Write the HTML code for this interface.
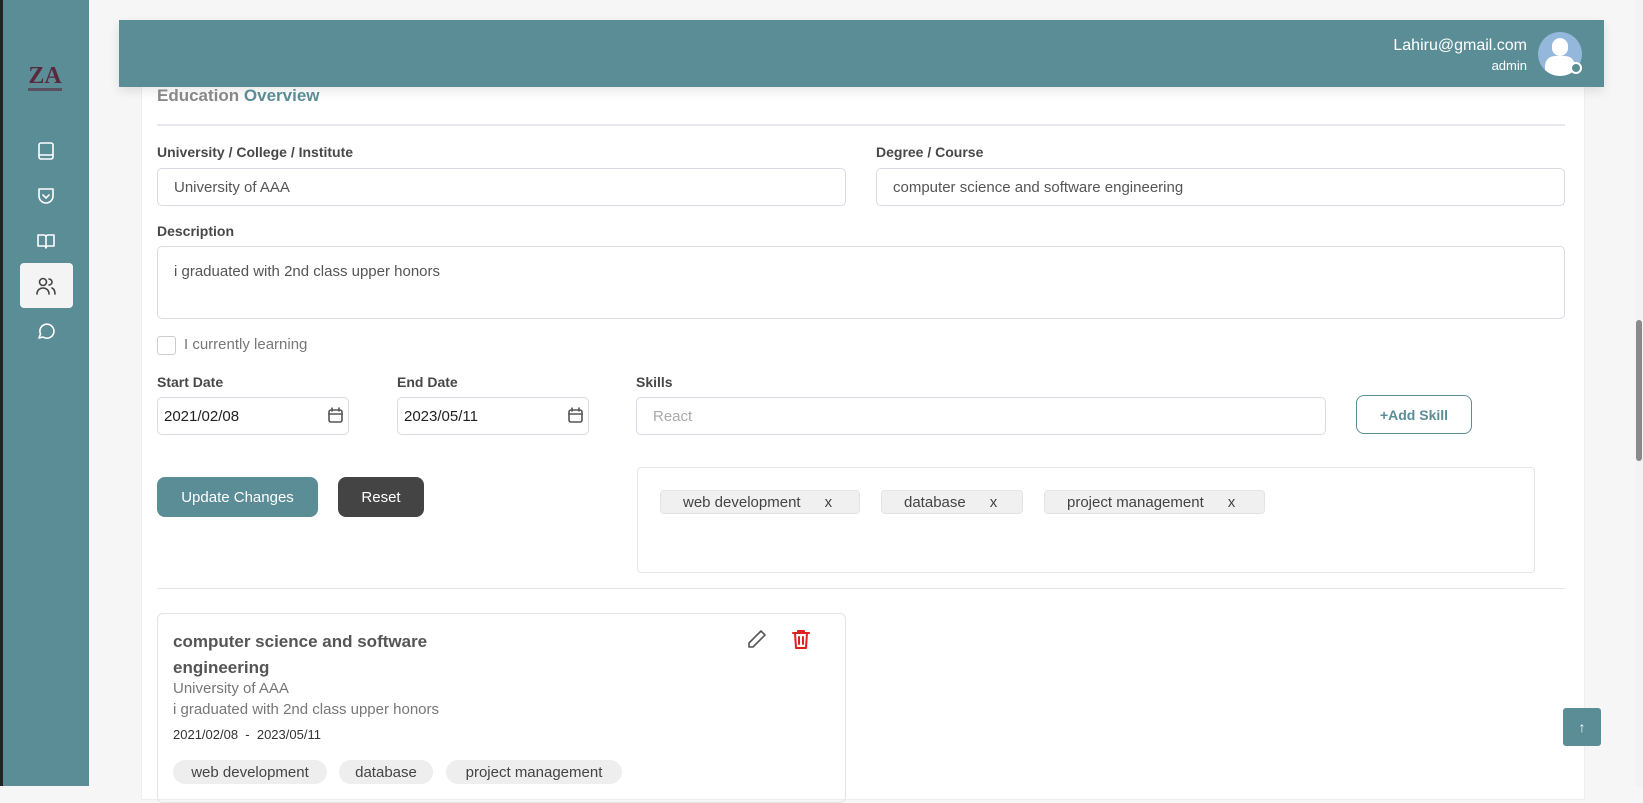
<!DOCTYPE html>
<html><head><meta charset="utf-8"><style>
*{box-sizing:border-box;margin:0;padding:0}
body{width:1643px;height:786px;overflow:hidden;background:#f6f6f6;font-family:"Liberation Sans",sans-serif;position:relative;color:#555}
.abs{position:absolute}
.side{left:0;top:0;width:89px;height:786px;background:#5b8d97;border-left:3px solid #222}
.card{left:141px;top:60px;width:1444px;height:740px;background:#fff;border:1px solid #eee}
.hdr{left:119px;top:20px;width:1485px;height:67px;background:#5b8d97;box-shadow:0 4px 10px rgba(0,0,0,.1)}
.lbl{font-size:14px;font-weight:bold;color:#484848}
.inp{border:1px solid #d8dbe3;border-radius:5px;background:#fff;font-size:15px;color:#555;padding-left:16px;display:flex;align-items:center}
.chip{background:#f0f0f0;border:1px solid #e4e4e4;border-radius:4px;font-size:15px;color:#444;display:flex;align-items:center;padding-left:22px;height:24px}
.pill{background:#eee;border-radius:12px;font-size:15px;color:#444;height:24px;display:flex;align-items:center;justify-content:center}
svg{fill:none;stroke:#fff;stroke-width:1.6;stroke-linecap:round;stroke-linejoin:round}
</style></head><body>
<div class="abs side"></div>
<div class="abs" style="left:28px;top:64px;width:34px;text-align:center;color:#5a2a3c;font-weight:bold;font-size:24px;font-family:'Liberation Serif',serif;line-height:24px">ZA</div>
<div class="abs" style="left:28px;top:88px;width:34px;height:3px;background:#5a2a3c;opacity:.6"></div>
<div class="abs" style="left:20px;top:263px;width:53px;height:45px;background:#f4f4f4;border-radius:4px"></div>
<svg class="abs" style="left:36px;top:141px" width="20" height="20" viewBox="0 0 20 20"><rect x="3" y="2" width="14" height="16" rx="2"/><path d="M3 14h14"/></svg>
<svg class="abs" style="left:36px;top:186px" width="20" height="20" viewBox="0 0 20 20"><path d="M3 3h14v7a7 7 0 0 1-14 0z"/><path d="M7 9l3 3 3-3"/></svg>
<svg class="abs" style="left:36px;top:231px" width="20" height="20" viewBox="0 0 20 20"><path d="M2 4h6a2 2 0 0 1 2 2v11a2 2 0 0 0-2-2H2z M18 4h-6a2 2 0 0 0-2 2v11a2 2 0 0 1 2-2h6z"/></svg>
<svg class="abs" style="left:35px;top:276px" width="22" height="20" viewBox="0 0 22 20"><g stroke="#444"><circle cx="8" cy="6" r="3.5"/><path d="M2 18c0-4 3-6 6-6s6 2 6 6"/><path d="M14 3a3 3 0 0 1 0 6M17 12c2 1 3 3 3 6"/></g></svg>
<svg class="abs" style="left:36px;top:321px" width="20" height="20" viewBox="0 0 20 20"><path d="M3 17l1.5-4A7 7 0 1 1 7 16z"/></svg>
<div class="abs card"></div>
<div class="abs hdr"></div>
<div class="abs" style="right:116px;top:36px;color:#fff;font-size:16px;text-align:right;line-height:20px">Lahiru@gmail.com<br><span style="font-size:13px">admin</span></div>
<div class="abs" style="left:1538px;top:32px;width:44px;height:44px;border-radius:50%;background:#94b8dc;overflow:hidden"><div class="abs" style="left:14px;top:6px;width:16px;height:18px;border-radius:8px;background:#fff"></div><div class="abs" style="left:7px;top:24px;width:30px;height:22px;border-radius:10px 10px 0 0;background:#fff"></div></div>
<div class="abs" style="left:1570px;top:62px;width:12px;height:12px;border-radius:50%;border:2px solid #fff;background:#5b8d97"></div>
<div class="abs" style="left:157px;top:86px;font-size:17px;font-weight:bold;color:#888">Education <span style="color:#5b8d97">Overview</span></div>
<div class="abs" style="left:157px;top:124px;width:1408px;height:2px;background:#e6e8ee"></div>
<div class="abs lbl" style="left:157px;top:144px">University / College / Institute</div>
<div class="abs inp" style="left:157px;top:168px;width:689px;height:38px">University of AAA</div>
<div class="abs lbl" style="left:876px;top:144px">Degree / Course</div>
<div class="abs inp" style="left:876px;top:168px;width:689px;height:38px">computer science and software engineering</div>
<div class="abs lbl" style="left:157px;top:223px">Description</div>
<div class="abs inp" style="left:157px;top:246px;width:1408px;height:73px;align-items:flex-start;padding-top:16px">i graduated with 2nd class upper honors</div>
<div class="abs" style="left:157px;top:336px;width:19px;height:19px;border:1px solid #ccc;border-radius:3px"></div>
<div class="abs" style="left:184px;top:336px;font-size:15px;color:#777">I currently learning</div>
<div class="abs lbl" style="left:157px;top:374px">Start Date</div>
<div class="abs lbl" style="left:397px;top:374px">End Date</div>
<div class="abs lbl" style="left:636px;top:374px">Skills</div>
<div class="abs inp" style="left:157px;top:397px;width:192px;height:38px;padding-left:6px;color:#222">2021/02/08</div>
<div class="abs inp" style="left:397px;top:397px;width:192px;height:38px;padding-left:6px;color:#222">2023/05/11</div>
<svg class="abs" style="left:327px;top:407px" width="17" height="17" viewBox="0 0 17 17"><g stroke="#555"><rect x="2" y="3" width="13" height="12" rx="2"/><path d="M2 7h13M5 1v3M12 1v3"/></g></svg>
<svg class="abs" style="left:567px;top:407px" width="17" height="17" viewBox="0 0 17 17"><g stroke="#555"><rect x="2" y="3" width="13" height="12" rx="2"/><path d="M2 7h13M5 1v3M12 1v3"/></g></svg>
<div class="abs inp" style="left:636px;top:397px;width:690px;height:38px;color:#aaa">React</div>
<div class="abs" style="left:1356px;top:395px;width:116px;height:39px;border:1px solid #5b8d97;border-radius:8px;color:#5b8d97;font-weight:bold;font-size:14px;display:flex;align-items:center;justify-content:center">+Add Skill</div>
<div class="abs" style="left:157px;top:477px;width:161px;height:40px;background:#5b8d97;border-radius:8px;color:#fff;font-size:15px;display:flex;align-items:center;justify-content:center">Update Changes</div>
<div class="abs" style="left:338px;top:477px;width:86px;height:40px;background:#444;border-radius:8px;color:#fff;font-size:15px;display:flex;align-items:center;justify-content:center">Reset</div>
<div class="abs" style="left:637px;top:467px;width:898px;height:106px;border:1px solid #e6e6e6;border-radius:4px"></div>
<div class="abs chip" style="left:660px;top:490px;width:200px">web development<span style="margin-left:24px">x</span></div>
<div class="abs chip" style="left:881px;top:490px;width:142px">database<span style="margin-left:24px">x</span></div>
<div class="abs chip" style="left:1044px;top:490px;width:221px">project management<span style="margin-left:24px">x</span></div>
<div class="abs" style="left:157px;top:588px;width:1408px;height:1px;background:#e2e4ea"></div>
<div class="abs" style="left:157px;top:613px;width:689px;height:190px;border:1px solid #e4e4e4;border-radius:6px"></div>
<div class="abs" style="left:173px;top:629px;font-size:17px;font-weight:bold;color:#555;line-height:26px">computer science and software<br>engineering</div>
<svg class="abs" style="left:746px;top:628px" width="22" height="22" viewBox="0 0 22 22"><path stroke="#555" d="M15 3l4 4L7 19H3v-4z"/></svg>
<svg class="abs" style="left:790px;top:628px" width="22" height="22" viewBox="0 0 22 22"><g stroke="#e02020" stroke-width="2"><path d="M3 5h16M8 5V3h6v2M5 5l1 15h10l1-15M9 9v7M13 9v7"/></g></svg>
<div class="abs" style="left:173px;top:680px;font-size:15px;color:#777">University of AAA</div>
<div class="abs" style="left:173px;top:701px;font-size:15px;color:#777">i graduated with 2nd class upper honors</div>
<div class="abs" style="left:173px;top:727px;font-size:13px;color:#333">2021/02/08 &nbsp;- &nbsp;2023/05/11</div>
<div class="abs pill" style="left:173px;top:760px;width:154px">web development</div>
<div class="abs pill" style="left:339px;top:760px;width:94px">database</div>
<div class="abs pill" style="left:446px;top:760px;width:176px">project management</div>
<div class="abs" style="left:1563px;top:708px;width:38px;height:38px;background:#5b8d97;border-radius:3px;color:#fff;font-size:14px;display:flex;align-items:center;justify-content:center">↑</div>
<div class="abs" style="left:1635px;top:0;width:8px;height:786px;background:#f3f3f3"></div>
<div class="abs" style="left:1636px;top:320px;width:6px;height:141px;background:#8a8a8a;border-radius:3px"></div>
</body></html>
